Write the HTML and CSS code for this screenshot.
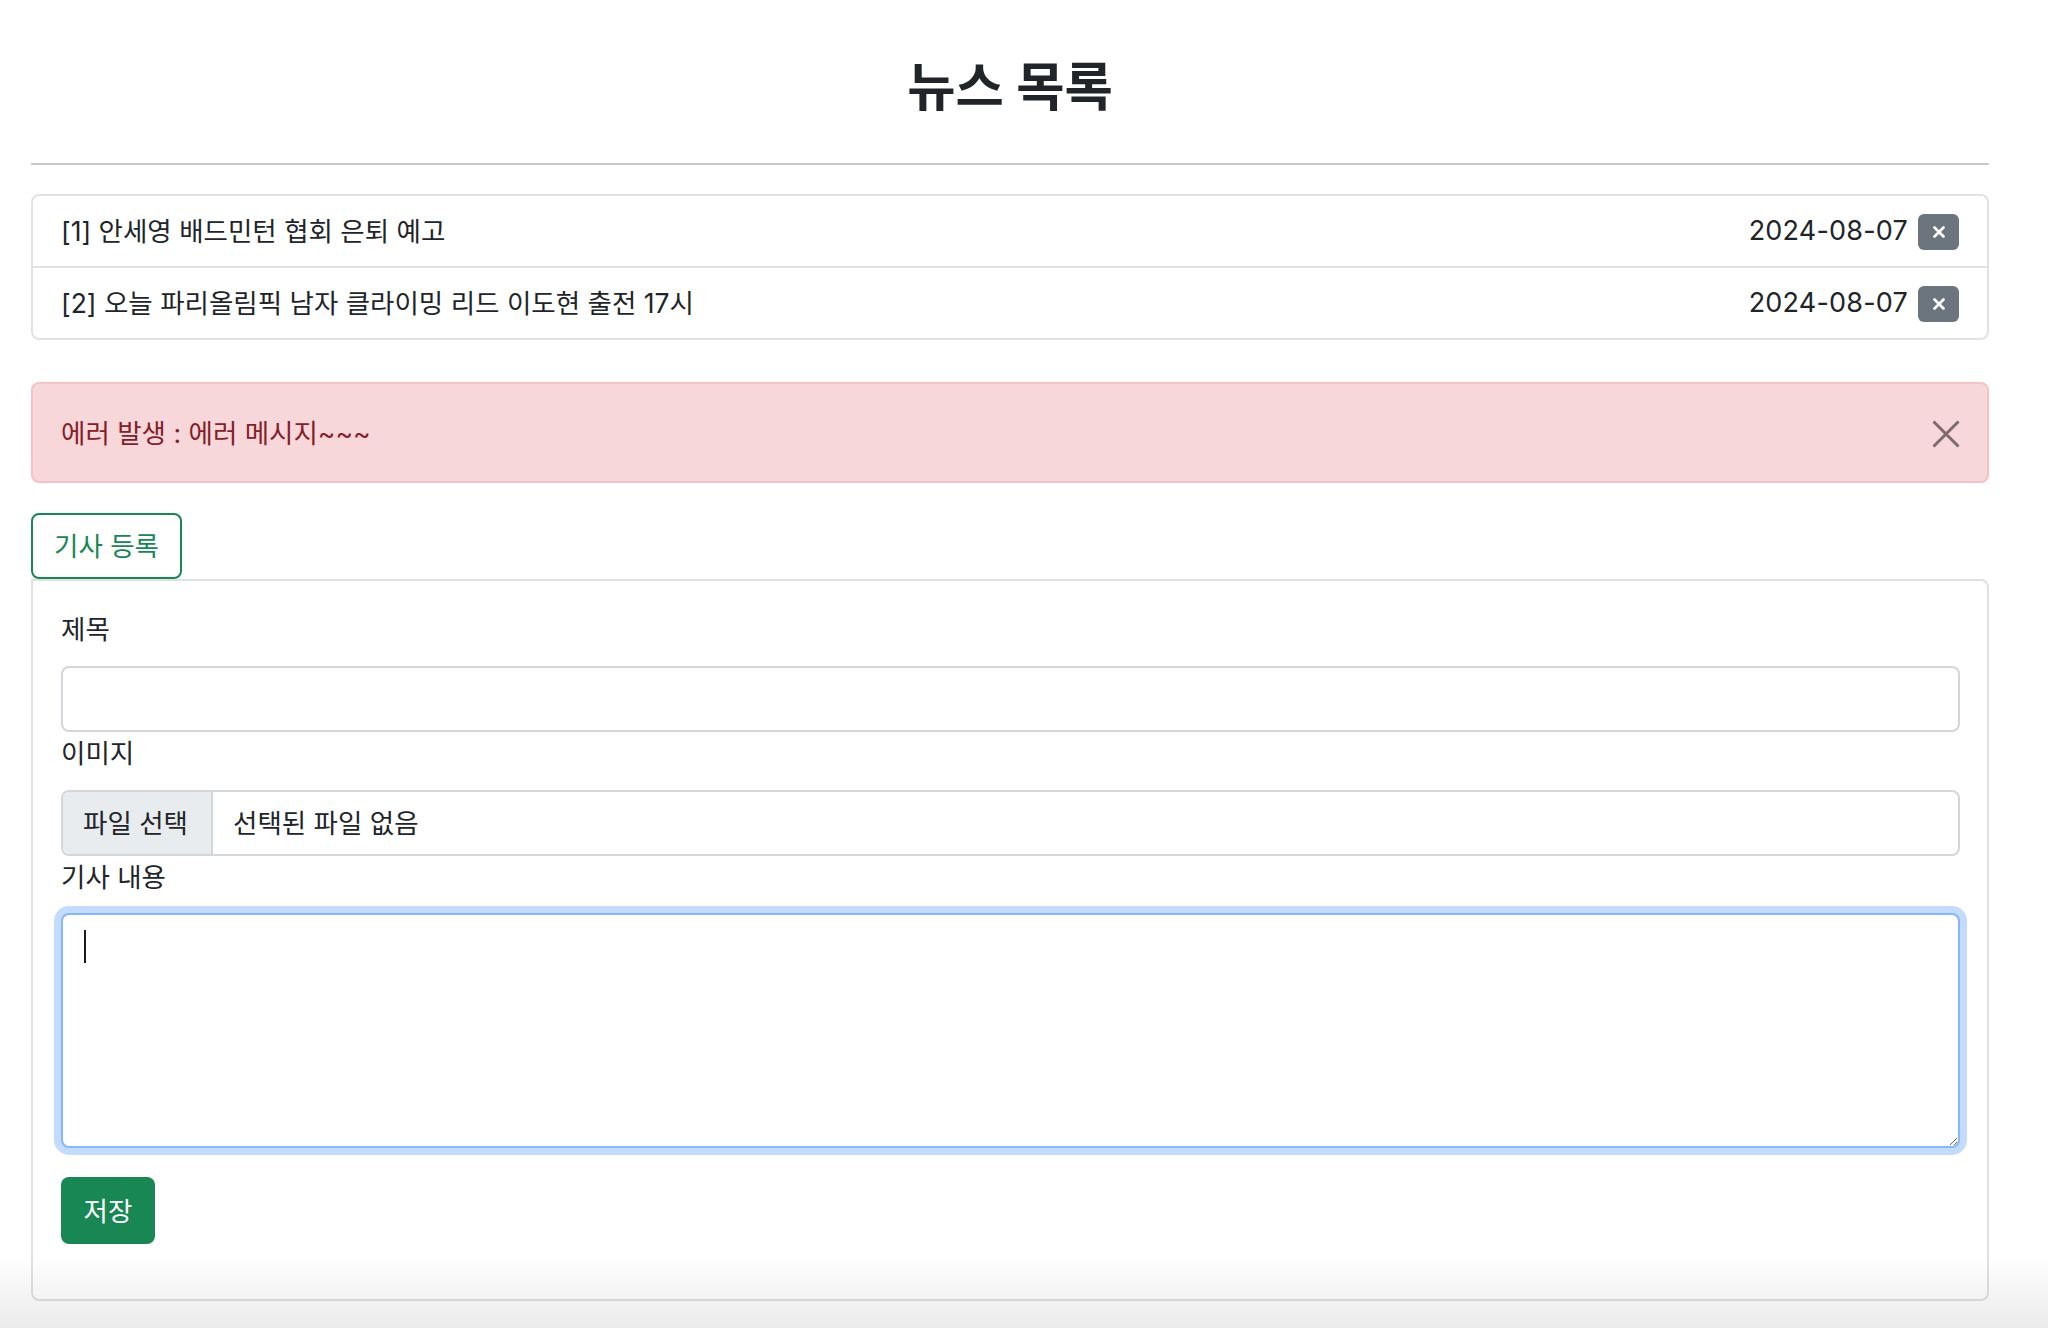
FILE: index.html
```html
<!DOCTYPE html>
<html lang="ko">
<head>
<meta charset="utf-8">
<title>뉴스 목록</title>
<link rel="stylesheet" href="styles.css">
</head>
<body>
<div class="container">
  <h1 class="title">뉴스 목록</h1>
  <hr class="divider">

  <ul class="news-list">
    <li class="news-item">
      <span class="news-title">[1] 안세영 배드민턴 협회 은퇴 예고</span>
      <span class="news-meta">
        <span class="news-date">2024-08-07</span>
        <button class="btn-delete" type="button" aria-label="삭제">
          <svg width="12" height="12" viewBox="0 0 12 12"><path d="M1.5 1.5 L10.5 10.5 M10.5 1.5 L1.5 10.5" stroke="#fff" stroke-width="2.6" stroke-linecap="round"/></svg>
        </button>
      </span>
    </li>
    <li class="news-item">
      <span class="news-title">[2] 오늘 파리올림픽 남자 클라이밍 리드 이도현 출전 17시</span>
      <span class="news-meta">
        <span class="news-date">2024-08-07</span>
        <button class="btn-delete" type="button" aria-label="삭제">
          <svg width="12" height="12" viewBox="0 0 12 12"><path d="M1.5 1.5 L10.5 10.5 M10.5 1.5 L1.5 10.5" stroke="#fff" stroke-width="2.6" stroke-linecap="round"/></svg>
        </button>
      </span>
    </li>
  </ul>

  <div class="alert">
    <span class="alert-text">에러 발생 : 에러 메시지~~~</span>
    <button class="btn-close" type="button" aria-label="닫기">
      <svg width="28" height="28" viewBox="0 0 28 28"><path d="M1.5 1.5 L26.5 26.5 M26.5 1.5 L1.5 26.5" stroke="#000" stroke-opacity="0.5" stroke-width="3"/></svg>
    </button>
  </div>

  <button class="tab" type="button">기사 등록</button>
  <div class="card">
    <label class="form-label">제목</label>
    <input class="form-control" type="text">

    <label class="form-label">이미지</label>
    <div class="file-input">
      <span class="file-btn">파일 선택</span>
      <span class="file-name">선택된 파일 없음</span>
    </div>

    <label class="form-label">기사 내용</label>
    <div class="textarea-wrap">
      <textarea class="form-textarea"></textarea>
      <span class="caret"></span>
    </div>

    <button class="btn-save" type="button">저장</button>
  </div>
</div>
<div class="bottom-shade"></div>
</body>
</html>
```

FILE: styles.css
```css
html, body {
  margin: 0;
  padding: 0;
  background: #fff;
}

body {
  font-family: Inter, "Noto Sans CJK KR", sans-serif;
  font-size: 26.5px;
  line-height: 42px;
  color: #212529;
}

.container {
  padding: 0 59px 0 31px;
}

.title {
  margin: 0;
  padding-top: 56px;
  font-size: 52.5px;
  line-height: 62px;
  font-weight: 700;
  text-align: center;
  color: #212529;
}

.divider {
  margin: 45px 0 0;
  border: 0;
  border-top: 2px solid #c8c9ca;
  height: 0;
}

.news-list {
  list-style: none;
  margin: 29px 0 0;
  padding: 0;
  border: 2px solid #e0e3e6;
  border-radius: 8px;
}

.news-item {
  display: flex;
  align-items: center;
  justify-content: space-between;
  height: 70px;
  padding: 0 28px;
}

.news-item + .news-item {
  border-top: 2px solid #e0e3e6;
}

.news-meta {
  display: flex;
  align-items: center;
  gap: 10px;
}

.news-date {
  font-size: 27px;
  letter-spacing: 0.2px;
}

.btn-delete {
  display: flex;
  align-items: center;
  justify-content: center;
  width: 41px;
  height: 36px;
  padding: 0;
  border: 0;
  border-radius: 6px;
  background: #6c757d;
  margin-top: 2px;
}

.alert {
  display: flex;
  align-items: center;
  justify-content: space-between;
  margin-top: 42px;
  height: 101px;
  box-sizing: border-box;
  padding: 0 27px 0 28px;
  background: #f8d7da;
  border: 2px solid #f5c2c7;
  border-radius: 8px;
  color: #842029;
}

.btn-close {
  display: flex;
  padding: 0;
  border: 0;
  background: transparent;
  margin-top: 2px;
}

.tab {
  display: block;
  margin-top: 30px;
  height: 66px;
  width: 151px;
  padding: 0;
  box-sizing: border-box;
  border: 2px solid #198754;
  border-radius: 8px;
  background: #fff;
  color: #198754;
  font-family: inherit;
  font-size: 26.5px;
  line-height: 42px;
}

.card {
  border: 2px solid #dfe2e5;
  border-radius: 0 8px 8px 8px;
  padding: 27px 27px 55px 28px;
}

.form-label {
  display: block;
}

.form-control,
.file-input {
  display: flex;
  width: 100%;
  height: 66px;
  box-sizing: border-box;
  margin-top: 16px;
  border: 2px solid #d3d7db;
  border-radius: 8px;
  background: #fff;
}

.file-input {
  align-items: stretch;
  overflow: hidden;
}

.file-btn {
  display: flex;
  align-items: center;
  width: 150px;
  box-sizing: border-box;
  padding-left: 20px;
  background: #e9ecef;
  border-right: 2px solid #d3d7db;
}

.file-name {
  display: flex;
  align-items: center;
  padding-left: 20px;
}

.textarea-wrap {
  position: relative;
  margin-top: 15px;
}

.form-textarea {
  display: block;
  width: 100%;
  height: 235px;
  box-sizing: border-box;
  margin: 0;
  padding: 10px 21px;
  border: 2px solid #86b7fe;
  border-radius: 8px;
  box-shadow: 0 0 0 7px rgba(13, 110, 253, 0.25);
  outline: none;
  resize: vertical;
  font-family: inherit;
  font-size: 26.5px;
  line-height: 42px;
  color: #212529;
  background: #fff;
}

.caret {
  position: absolute;
  left: 23px;
  top: 17px;
  width: 2px;
  height: 33px;
  background: #1a1a1a;
}

.btn-save {
  display: block;
  margin-top: 29px;
  width: 94px;
  height: 67px;
  padding: 0;
  border: 0;
  border-radius: 8px;
  background: #198754;
  color: #fff;
  font-family: inherit;
  font-size: 26.5px;
  line-height: 42px;
}

.bottom-shade {
  position: fixed;
  left: 0;
  right: 0;
  bottom: 0;
  height: 72px;
  background: linear-gradient(to bottom, rgba(0, 0, 0, 0), rgba(0, 0, 0, 0.08));
  pointer-events: none;
}
```
